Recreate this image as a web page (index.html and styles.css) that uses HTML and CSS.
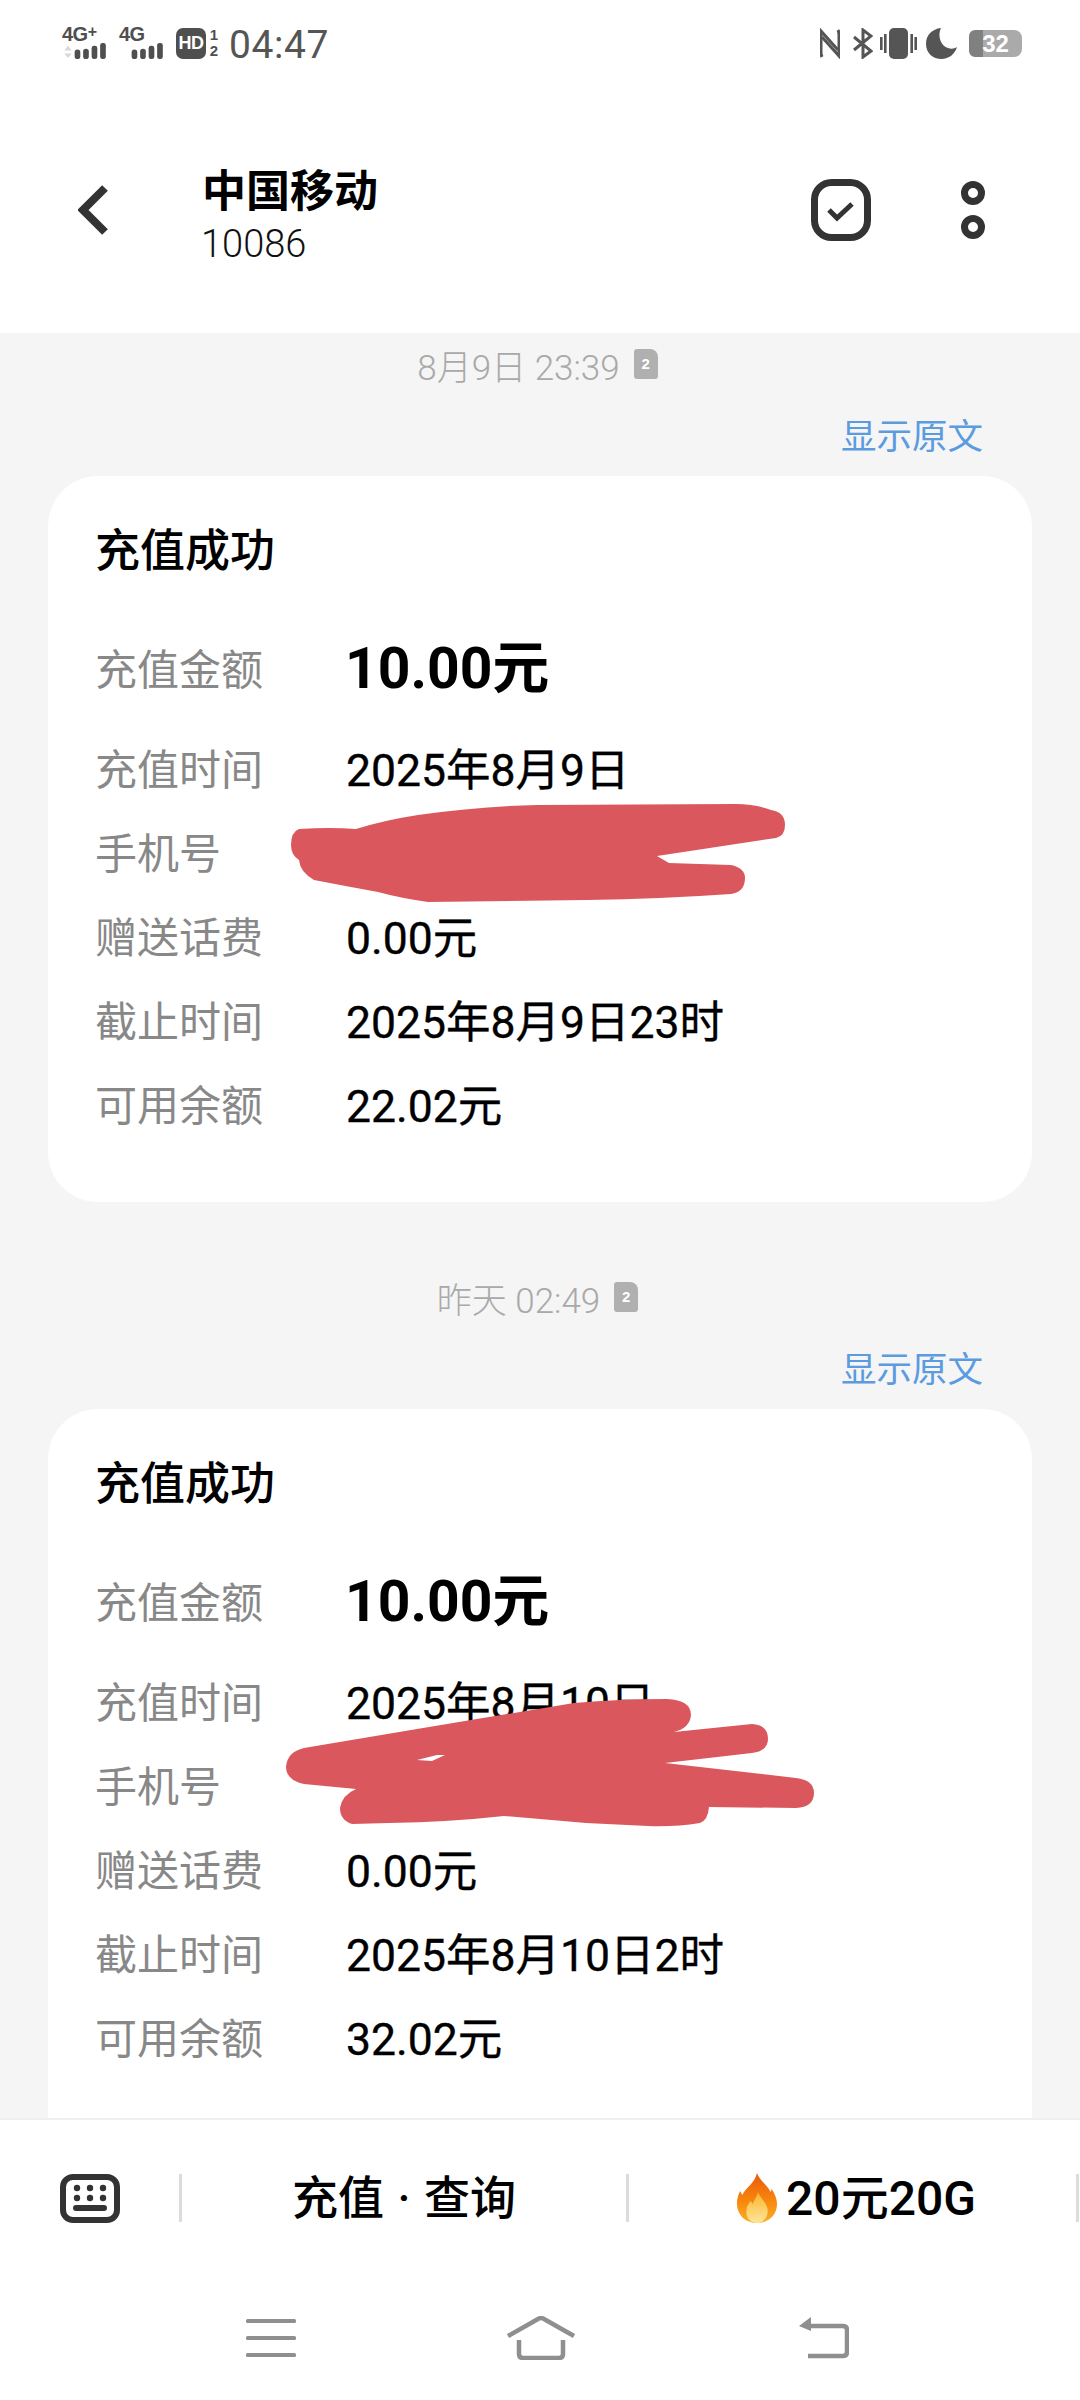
FILE: index.html
```html
<!DOCTYPE html>
<html lang="zh-CN">
<head>
<meta charset="utf-8">
<title>中国移动</title>
<link rel="stylesheet" href="styles.css">
</head>
<body>
<div class="phone">
  <div class="top">
    <div class="status">
      <div class="status-left">
        <div class="sig sig-a">
          <span class="net">4G<sup class="plus">+</sup></span>
          <svg class="bars" width="47" height="18" viewBox="0 0 47 18"><path class="arrow" d="M1 8 5 3l4 5zM1 11l4 5 4-5z"/><rect x="12" y="7" width="6" height="10" rx="3"/><rect x="21" y="6" width="6" height="11" rx="3"/><rect x="30" y="3" width="6" height="14" rx="2.5"/><rect x="39" y="0" width="6" height="17" rx="2.5"/></svg>
        </div>
        <div class="sig sig-b">
          <span class="net">4G</span>
          <svg class="bars" width="47" height="18" viewBox="0 0 47 18"><rect x="12" y="7" width="6" height="10" rx="3"/><rect x="21" y="6" width="6" height="11" rx="3"/><rect x="30" y="3" width="6" height="14" rx="2.5"/><rect x="39" y="0" width="6" height="17" rx="2.5"/></svg>
        </div>
        <span class="hd">HD</span>
        <span class="simnums"><span>1</span><span>2</span></span>
        <span class="time">04:47</span>
      </div>
      <div class="status-right">
        <svg width="20" height="31" viewBox="0 0 20 31" fill="none" stroke="#555" stroke-width="3"><path d="M2 29c-1-2-1-3-1-5V3l17 19"/><path d="M18 2c1 2 1 3 1 5v21L2 9"/></svg>
        <svg class="bt" width="20" height="31" viewBox="0 0 20 31" fill="none" stroke="#555" stroke-width="3"><path d="M1 9l17 14-8 6V2l8 6L1 22"/></svg>
        <svg class="vib" width="37" height="31" viewBox="0 0 37 31"><rect x="9" y="0" width="19" height="31" rx="5"/><rect x="0" y="9" width="2.6" height="13"/><rect x="4" y="6" width="2.6" height="19"/><rect x="30.4" y="6" width="2.6" height="19"/><rect x="34.4" y="9" width="2.6" height="13"/></svg>
        <svg class="moon" width="31" height="31" viewBox="0 0 31 31"><path d="M15 0C6 1 0 7 0 16c0 9 7 15 15.500 15C23 31 29 26 31 19c-3 2-6 2-9 1C15 18 11 8 15 0z"/></svg>
        <div class="battery"><span class="battery-num">32</span></div>
      </div>
    </div>
    <header class="header">
      <svg class="back" width="30" height="50" viewBox="0 0 30 50" fill="none" stroke="#333" stroke-width="8"><path d="M27 3 5 25l22 22"/></svg>
      <div class="contact">
        <div class="contact-name">中国移动</div>
        <div class="contact-num">10086</div>
      </div>
      <svg class="select" width="60" height="62" viewBox="0 0 60 62" fill="none" stroke="#333"><rect x="3.500" y="3.500" width="53" height="55" rx="17" stroke-width="7"/><path d="M18 31l8 8 15-14" stroke-width="5"/></svg>
      <svg class="more" width="24" height="58" viewBox="0 0 24 58" fill="none" stroke="#333" stroke-width="7"><circle cx="12" cy="12" r="8.500"/><circle cx="12" cy="46" r="8.500"/></svg>
    </header>
  </div>

  <main class="thread">
    <div class="stamp stamp-first"><span>8月9日 23:39</span><span class="sim">2</span></div>
    <div class="original">显示原文</div>
    <section class="card">
      <h2 class="card-title">充值成功</h2>
      <div class="row row-big"><span class="label">充值金额</span><span class="value big">10.00元</span></div>
      <div class="row"><span class="label">充值时间</span><span class="value">2025年8月9日</span></div>
      <div class="row"><span class="label">手机号</span><span class="value"></span></div>
      <div class="row"><span class="label">赠送话费</span><span class="value">0.00元</span></div>
      <div class="row"><span class="label">截止时间</span><span class="value">2025年8月9日23时</span></div>
      <div class="row"><span class="label">可用余额</span><span class="value">22.02元</span></div>
      <svg class="scribble" width="984" height="726" viewBox="48 476 984 726"><path d="M299 829Q330 827 356 829Q385 820 418 815Q480 806 537 805L736 804Q755 804 771 810Q785 812 785 825Q785 836 776 838L657 856L669 863L731 865Q745 868 745 878Q745 892 731 894Q660 899 587 900L428 902Q400 898 378 892Q345 886 314 880Q300 872 299 860Q291 855 291 845Q291 832 299 829Z"/></svg>
    </section>

    <div class="stamp stamp-next"><span>昨天 02:49</span><span class="sim">2</span></div>
    <div class="original">显示原文</div>
    <section class="card card-last">
      <h2 class="card-title">充值成功</h2>
      <div class="row row-big"><span class="label">充值金额</span><span class="value big">10.00元</span></div>
      <div class="row"><span class="label">充值时间</span><span class="value">2025年8月10日</span></div>
      <div class="row"><span class="label">手机号</span><span class="value"></span></div>
      <div class="row"><span class="label">赠送话费</span><span class="value">0.00元</span></div>
      <div class="row"><span class="label">截止时间</span><span class="value">2025年8月10日2时</span></div>
      <div class="row"><span class="label">可用余额</span><span class="value">32.02元</span></div>
      <svg class="scribble" width="984" height="726" viewBox="48 1409 984 726"><path d="M304 1748L423 1728L574 1703Q620 1699 667 1699Q691 1700 691 1715Q690 1728 674 1732L752 1724Q768 1725 768 1739Q768 1751 752 1753L665 1763L796 1778Q814 1780 814 1793Q814 1807 796 1808L709 1807Q708 1820 700 1823Q675 1827 648 1826L586 1823L504 1816Q450 1822 389 1823L352 1824Q340 1820 340 1808Q342 1795 356 1789L304 1784Q286 1780 286 1767Q287 1752 304 1748Z"/><path class="gap" d="M417 1760L432 1761L445 1755L437 1755Z"/></svg>
    </section>
  </main>

  <footer class="bottom">
    <div class="menu">
      <div class="menu-cell menu-keys">
        <svg width="60" height="49" viewBox="0 0 60 49"><rect class="kb" x="3" y="3" width="54" height="43" rx="10"/><g class="kb-keys"><circle cx="17" cy="14" r="3.200"/><circle cx="30" cy="14" r="3.200"/><circle cx="43" cy="14" r="3.200"/><circle cx="17" cy="24" r="3.200"/><circle cx="30" cy="24" r="3.200"/><circle cx="43" cy="24" r="3.200"/><rect x="13" y="31" width="34" height="6" rx="3"/></g></svg>
      </div>
      <div class="menu-cell menu-query"><span class="menu-text">充值 · 查询</span></div>
      <div class="menu-cell menu-deal">
        <svg width="40" height="50" viewBox="0 0 38 50" preserveAspectRatio="none">
          <defs>
            <linearGradient id="fl" x1="0" y1="0" x2="0" y2="1"><stop offset="0" stop-color="#e8590c"/><stop offset=".6" stop-color="#f98a0e"/><stop offset="1" stop-color="#fbb02a"/></linearGradient>
            <linearGradient id="fi" x1="0" y1="0" x2="0" y2="1"><stop offset="0" stop-color="#fbb52c"/><stop offset="1" stop-color="#fde69a"/></linearGradient>
          </defs>
          <path fill="url(#fl)" d="M19 0c2 7 9 11 13 19l1-3c3 5 5 10 5 15 0 11-8 19-19 19S0 42 0 31c0-5 1-9 3-13l2 4C8 15 17 10 19 0z"/>
          <path fill="url(#fi)" d="M20 19c1 5 8 10 9 17 1 8-4 14-10 14S8 45 9 37c0-4 2-6 4-9l2 3c1-4 4-7 5-12z"/>
        </svg>
        <span class="menu-text">20元20G</span>
      </div>
    </div>
    <nav class="nav">
      <svg class="nav-menu" width="50" height="38" viewBox="0 0 50 38"><rect y="0" width="50" height="4" rx="1.500"/><rect y="17" width="50" height="4" rx="1.500"/><rect y="34" width="50" height="4" rx="1.500"/></svg>
      <svg class="nav-home" width="70" height="44" viewBox="0 0 70 44" fill="none" stroke="#8f8f8f" stroke-width="4.500"><path d="M2 20 32 3q3-2 6 0l30 17"/><path d="M13 24v14q0 4 4 4h36q4 0 4-4V24"/></svg>
      <svg class="nav-back" width="50" height="42" viewBox="0 0 50 42" fill="none" stroke="#8f8f8f" stroke-width="4.500"><path d="M8 9h36q4 0 4 4v22q0 4-4 4H9"/><path class="arrow-head" d="M12 0v14L0 9z"/></svg>
    </nav>
  </footer>
</div>
</body>
</html>
```
FILE: styles.css
```css
* { box-sizing: border-box; }
html, body { margin: 0; padding: 0; }
body { background: #fff; font-family: Roboto, "Noto Sans CJK SC", sans-serif; color: #000; }
.phone { width: 1080px; height: 2400px; display: flex; flex-direction: column; overflow: hidden; }

.top { height: 333px; flex: none; background: #fff; display: flex; flex-direction: column; }
.status { height: 86px; display: flex; justify-content: space-between; align-items: center; padding: 0 58px 0 62px; color: #555; }
.status-left { display: flex; align-items: center; }
.status-right { display: flex; align-items: center; }
.sig { display: flex; flex-direction: column; height: 34px; }
.sig-a { width: 47px; }
.sig-b { width: 47px; margin-left: 10px; }
.net { font: 700 20px/17px "Liberation Sans", sans-serif; color: #4f4f4f; letter-spacing: -0.5px; }
.plus { font-size: 16px; line-height: 0; vertical-align: 4px; }
.bars { display: block; fill: #4f4f4f; }
.bars .arrow { fill: #d8d8d8; }
.hd { width: 30px; height: 31px; margin-left: 10px; border-radius: 7px; background: #4f4f4f; color: #fff; font: 700 18px/31px "Liberation Sans", sans-serif; text-align: center; letter-spacing: -0.5px; }
.simnums { display: flex; flex-direction: column; width: 12px; margin-left: 2px; font: 700 15px/16px "Liberation Sans", sans-serif; color: #4f4f4f; text-align: center; }
.time { font-size: 39px; line-height: 44px; margin: 3px 0 0 9px; color: #555; letter-spacing: 0.6px; }
.bt { margin-left: 13px; }
.vib { margin-left: 7px; fill: #555; }
.moon { margin-left: 9px; fill: #555; }
.battery { width: 53px; height: 27px; margin-left: 12px; border-radius: 6px 8px 8px 6px; background: linear-gradient(90deg, #808080 0 27%, #aaa 27%); display: flex; align-items: center; justify-content: center; }
.battery-num { font: 700 24px/27px "Liberation Sans", sans-serif; color: #fff; }

.header { flex: 1; display: flex; align-items: center; padding-left: 78px; }
.back { flex: none; }
.contact { margin-left: 93px; width: 610px; padding-top: 13px; }
.contact-name { font-size: 44px; line-height: 56px; font-weight: 700; padding-left: 1px; }
.contact-num { font-size: 38px; line-height: 49px; font-weight: 300; color: #111; }
.select { flex: none; }
.more { flex: none; margin-left: 90px; }

.thread { flex: 1; min-height: 0; overflow: hidden; background: #f5f5f5; }
.stamp { height: 40px; display: flex; justify-content: center; align-items: center; gap: 14px; font-size: 35px; font-weight: 300; color: #a9a9a9; padding-right: 5px; }
.stamp-first { margin-top: 11px; }
.stamp-next { margin-top: 75px; }
.sim { width: 24px; height: 30px; background: #b0b0b0; color: #fff; border-radius: 3px 8px 3px 3px; font: 700 15px/30px "Liberation Sans", sans-serif; text-align: center; }
.original { height: 52px; margin: 27px 0 13px; padding-right: 97px; text-align: right; font-size: 35.5px; line-height: 52px; color: #5b9be0; }
.card { position: relative; margin: 0 48px; height: 726px; background: #fff; border-radius: 50px; padding: 46px 0 0 47px; }
.card-last { height: 820px; }
.card-title { margin: 0 0 28px; font-size: 45px; line-height: 60px; font-weight: 500; color: #000; }
.row { display: flex; align-items: center; height: 84px; padding-bottom: 4px; }
.row-big { height: 116px; }
.label { width: 251px; flex: none; font-size: 42px; color: #888; font-weight: 400; }
.value { font-size: 44.5px; font-weight: 400; color: #000; -webkit-text-stroke: 0.35px #000; }
.big { font-size: 57px; font-weight: 700; -webkit-text-stroke: 0; position: relative; top: -3px; margin-left: -1px; }
.scribble { position: absolute; left: 0; top: 0; fill: #da585d; }
.gap { fill: #fff; }

.bottom { height: 282px; flex: none; background: #fff; border-top: 2px solid #f0f0f0; position: relative; }
.menu { display: flex; align-items: center; height: 52px; margin-top: 52px; }
.menu-cell { height: 48px; border-right: 3px solid #dcdcdc; display: flex; align-items: center; justify-content: center; font-size: 46px; font-weight: 500; }
.menu-text { position: relative; top: -4px; }
.menu-keys { width: 182px; justify-content: flex-start; padding-left: 60px; }
.menu-query { width: 447px; word-spacing: 2px; }
.menu-deal { width: 450px; gap: 9px; font-size: 48px; padding-left: 8px; }
.nav { display: flex; align-items: center; height: 46px; margin-top: 91px; padding-left: 246px; }
.nav-menu { fill: #8f8f8f; }
.nav-home { margin-left: 210px; }
.nav-back { margin-left: 223px; }
.arrow-head { fill: #8f8f8f; stroke: none; }
.kb { fill: none; stroke: #333; stroke-width: 6; }
.kb-keys { fill: #333; }
```
